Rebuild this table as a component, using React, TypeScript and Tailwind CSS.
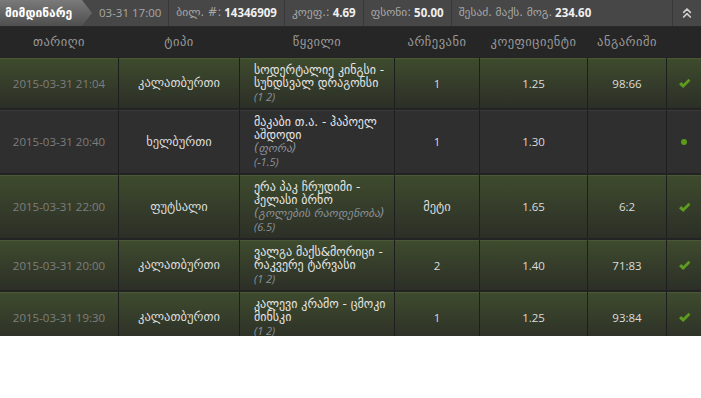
import { ChevronsUp } from "lucide-react";

type Bet = {
  date: string;
  sport: string;
  match: string[];
  notes: string[];
  pick: string;
  odds: string;
  score: string;
  status: "won" | "live";
};

const bets: Bet[] = [
  {
    date: "2015-03-31 21:04",
    sport: "კალათბურთი",
    match: ["სოდერტალიე კინგსი -", "სუნდსვალ დრაგონსი"],
    notes: ["(1 2)"],
    pick: "1",
    odds: "1.25",
    score: "98:66",
    status: "won",
  },
  {
    date: "2015-03-31 20:40",
    sport: "ხელბურთი",
    match: ["მაკაბი თ.ა. - ჰაპოელ", "აშდოდი"],
    notes: ["(ფორა)", "(-1.5)"],
    pick: "1",
    odds: "1.30",
    score: "",
    status: "live",
  },
  {
    date: "2015-03-31 22:00",
    sport: "ფუტსალი",
    match: ["ერა პაკ ჩრუდიმი -", "ჰელასი ბრნო"],
    notes: ["(გოლების რაოდენობა)", "(6.5)"],
    pick: "მეტი",
    odds: "1.65",
    score: "6:2",
    status: "won",
  },
  {
    date: "2015-03-31 20:00",
    sport: "კალათბურთი",
    match: ["ვალგა მაქს&მორიცი -", "რაკვერე ტარვასი"],
    notes: ["(1 2)"],
    pick: "2",
    odds: "1.40",
    score: "71:83",
    status: "won",
  },
  {
    date: "2015-03-31 19:30",
    sport: "კალათბურთი",
    match: ["კალევი კრამო - ცმოკი", "მინსკი"],
    notes: ["(1 2)"],
    pick: "1",
    odds: "1.25",
    score: "93:84",
    status: "won",
  },
];

const cols = "grid grid-cols-[118px_120px_154px_84px_107px_78px_34px] gap-x-px";
// Georgian reads larger than the Latin digits in the original
const ka = "font-['DejaVu_Sans',sans-serif] text-[12.5px]";
const num = "font-['Open_Sans','DejaVu_Sans',sans-serif] text-[11.5px]";
const isKa = (s: string) => /[ა-ჰ]/.test(s);

function TopItem({ label, value }: { label: string; value?: string }) {
  return (
    <div className="flex items-center border-r border-[#383838] px-[7px] text-[#a8a8a8]">
      {value ? (
        <span className="font-['DejaVu_Sans',sans-serif] text-[11.5px]">{label}</span>
      ) : (
        <span className={num}>{label}</span>
      )}
      {value && <b className={`${num} ml-[3px] font-bold text-[#f0f0f0]`}>{value}</b>}
    </div>
  );
}

function Check() {
  return (
    <svg width="13" height="11" viewBox="0 0 13 11">
      <path d="M1 6.2 L3.3 4 L5.2 6 L10.6 0.8 L12.4 2.8 L5.2 10 Z" fill="#5d9c1f" />
    </svg>
  );
}

export default function App() {
  return (
    <div className="h-[336px] overflow-hidden bg-[#232323] font-['Open_Sans','DejaVu_Sans',sans-serif] text-[11.5px]">
      <div className="flex h-[27px] border-b border-[#2a2a2a] bg-[#474747]">
        <div className="flex w-[92px] shrink-0 items-center bg-gradient-to-b from-[#7a7a7a] to-[#4f4f4f] pl-[5px] font-['DejaVu_Sans',sans-serif] text-[12px] font-bold text-white [clip-path:polygon(0_0,82px_0,100%_50%,82px_100%,0_100%)]">
          მიმდინარე
        </div>
        <TopItem label="03-31 17:00" />
        <TopItem label="ბილ. #:" value="14346909" />
        <TopItem label="კოეფ.:" value="4.69" />
        <TopItem label="ფსონი:" value="50.00" />
        <div className="flex flex-1 items-center border-r border-[#383838] px-[7px] text-[#a8a8a8]">
          <span className="font-['DejaVu_Sans',sans-serif] text-[11.5px]">შესაძ. მაქს. მოგ.</span>
          <b className={`${num} ml-[3px] font-bold text-[#f0f0f0]`}>234.60</b>
        </div>
        <div className="flex w-[28px] items-center justify-center text-[#d0d0d0]">
          <ChevronsUp size={16} strokeWidth={2.5} />
        </div>
      </div>

      <div
        className={`${cols} h-[30px] items-center bg-[#262626] text-center font-['DejaVu_Sans',sans-serif] text-[12.5px] tracking-[0.5px] text-[#9a9a9a]`}
      >
        <div>თარიღი</div>
        <div>ტიპი</div>
        <div>წყვილი</div>
        <div>არჩევანი</div>
        <div>კოეფიციენტი</div>
        <div>ანგარიში</div>
        <div />
      </div>

      <div className="flex flex-col gap-[2px] pt-px">
        {bets.map((b, i) => {
          const cell =
            b.status === "won"
              ? "bg-gradient-to-b from-[#3e4b2d] to-[#2c2f27] border-t border-[#4a5838]"
              : "bg-[#2f2f2f] border-t border-[#3a3a3a]";
          const center = `${cell} flex items-center justify-center text-[#dcdcdc]`;
          return (
            <div key={i} className={`${cols} bg-[#1e1e1e]`}>
              <div className={`${cell} flex items-center justify-center text-[#7e7e7e]`}>{b.date}</div>
              <div className={center}>
                <span className={ka}>{b.sport}</span>
              </div>
              <div className={`${cell} py-[5px] pl-[14px] text-[#e4e4e4]`}>
                {b.match.map((m) => (
                  <div key={m} className="font-['DejaVu_Sans',sans-serif] text-[12px] leading-[13px]">
                    {m}
                  </div>
                ))}
                {b.notes.map((n) => (
                  <div
                    key={n}
                    className={`italic leading-[13px] text-[#8b919b] ${isKa(n) ? "font-['DejaVu_Sans',sans-serif] text-[11.5px]" : "text-[11px]"}`}
                  >
                    {n}
                  </div>
                ))}
              </div>
              <div className={center}>
                <span className={isKa(b.pick) ? ka : ""}>{b.pick}</span>
              </div>
              <div className={center}>{b.odds}</div>
              <div className={center}>{b.score}</div>
              <div className={`${cell} flex items-center justify-center`}>
                {b.status === "won" ? (
                  <Check />
                ) : (
                  <span className="h-[6px] w-[6px] rounded-full bg-[#5a9a1c]" />
                )}
              </div>
            </div>
          );
        })}
      </div>
    </div>
  );
}
